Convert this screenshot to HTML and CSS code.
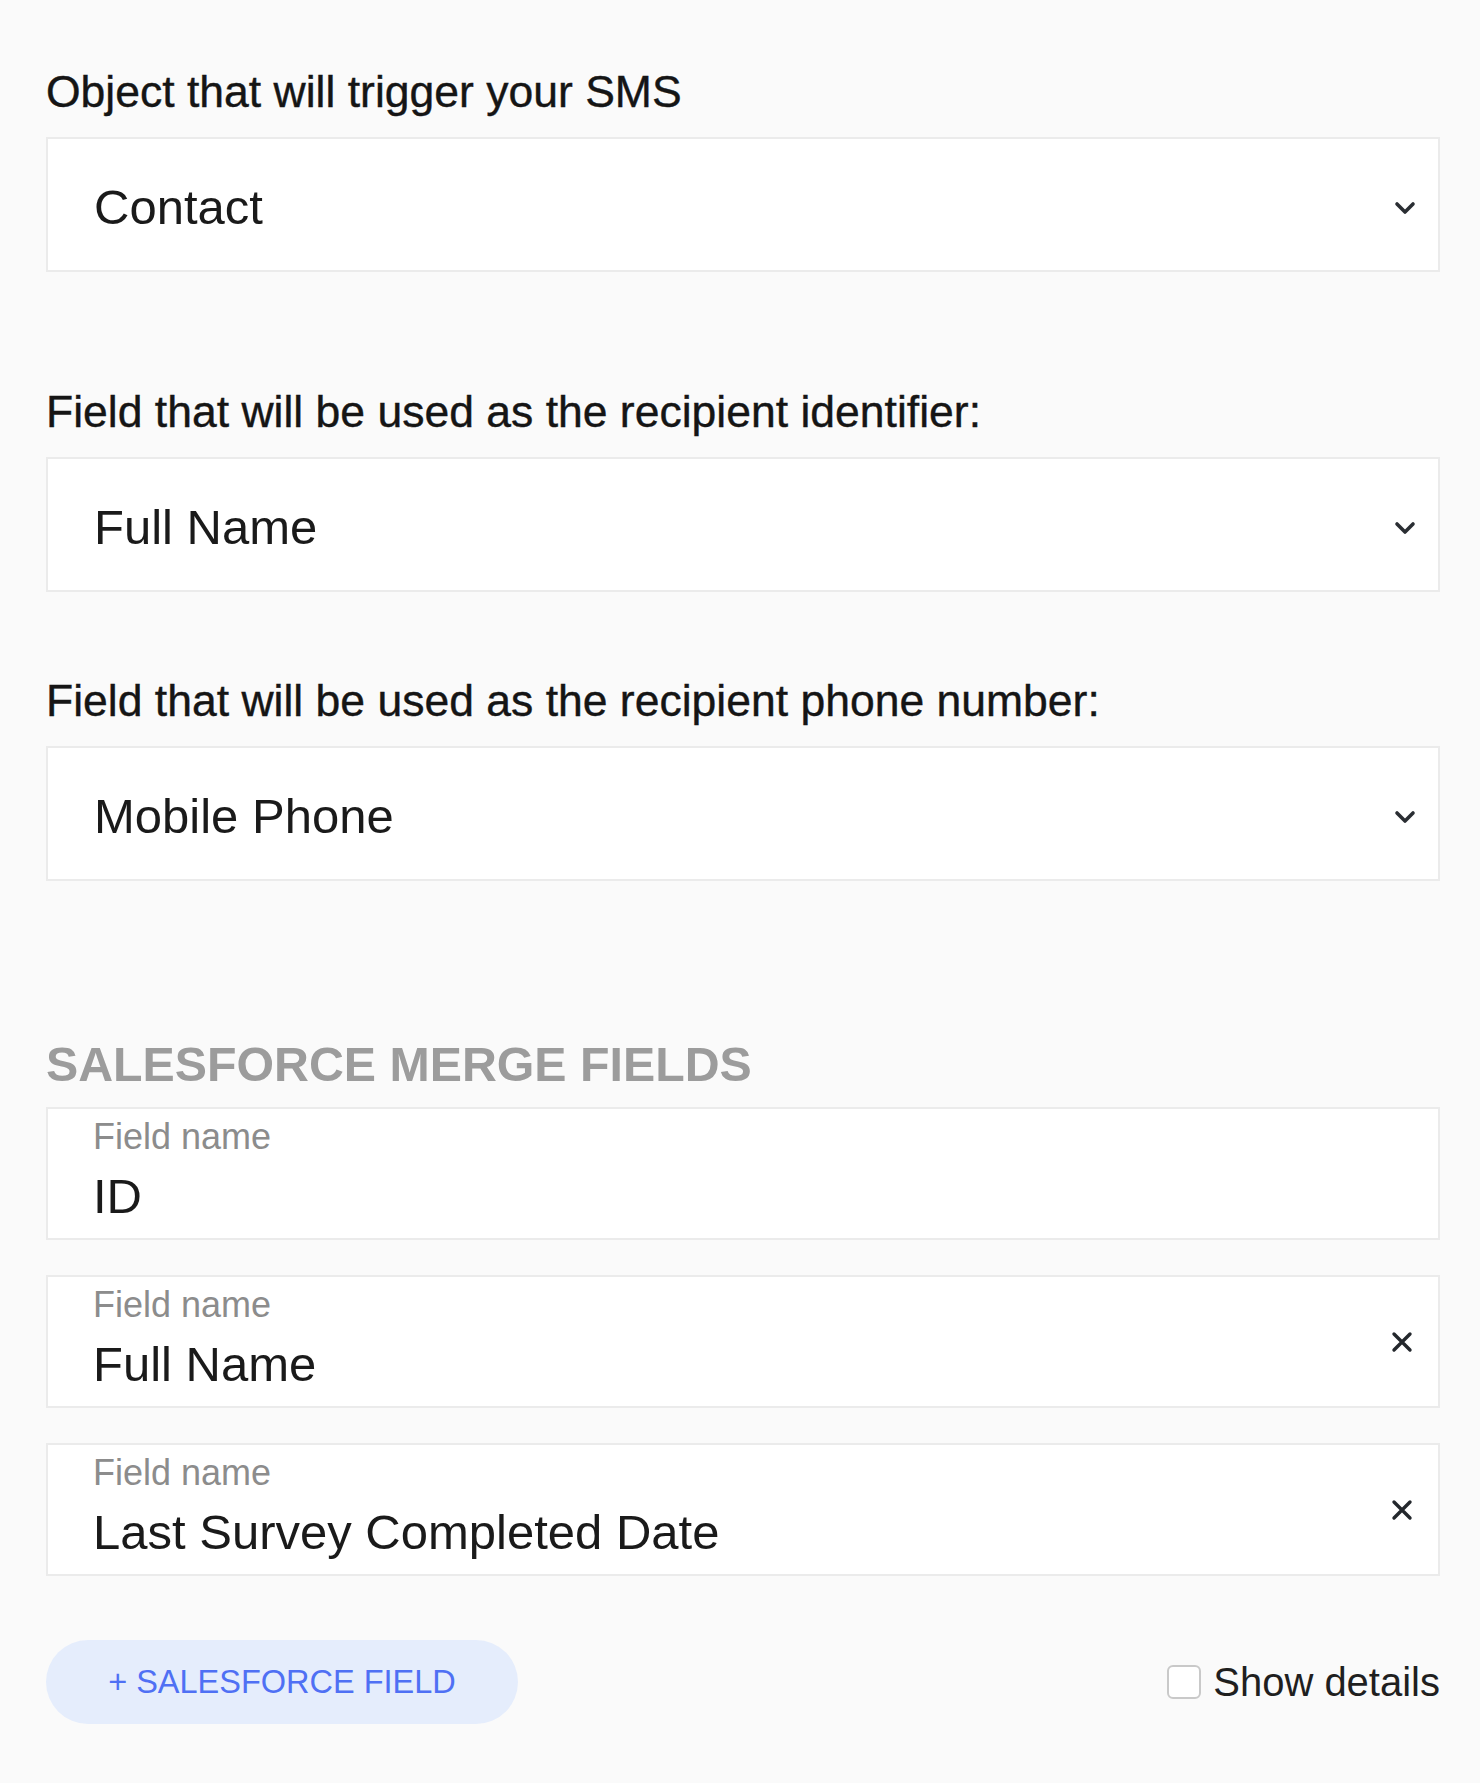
FILE: index.html
```html
<!DOCTYPE html>
<html lang="en">
<head>
<meta charset="utf-8">
<title>SMS trigger settings</title>
<link rel="stylesheet" href="styles.css">
</head>
<body>
<div class="page">
  <div class="group group-first">
    <div class="label">Object that will trigger your SMS</div>
    <div class="select">
      <span class="value">Contact</span>
      <svg class="chevron" width="22" height="14" viewBox="0 0 22 14"><path d="M3 3 L11 11 L19 3" fill="none" stroke="#2a2e33" stroke-width="3.6" stroke-linecap="round" stroke-linejoin="round"/></svg>
    </div>
  </div>
  <div class="group group-second">
    <div class="label">Field that will be used as the recipient identifier:</div>
    <div class="select">
      <span class="value">Full Name</span>
      <svg class="chevron" width="22" height="14" viewBox="0 0 22 14"><path d="M3 3 L11 11 L19 3" fill="none" stroke="#2a2e33" stroke-width="3.6" stroke-linecap="round" stroke-linejoin="round"/></svg>
    </div>
  </div>
  <div class="group group-third">
    <div class="label">Field that will be used as the recipient phone number:</div>
    <div class="select">
      <span class="value">Mobile Phone</span>
      <svg class="chevron" width="22" height="14" viewBox="0 0 22 14"><path d="M3 3 L11 11 L19 3" fill="none" stroke="#2a2e33" stroke-width="3.6" stroke-linecap="round" stroke-linejoin="round"/></svg>
    </div>
  </div>

  <h2 class="section-title">SALESFORCE MERGE FIELDS</h2>

  <div class="merge-list">
    <div class="merge-field">
      <div class="mf-text">
        <div class="mf-label">Field name</div>
        <div class="mf-value">ID</div>
      </div>
    </div>
    <div class="merge-field">
      <div class="mf-text">
        <div class="mf-label">Field name</div>
        <div class="mf-value">Full Name</div>
      </div>
      <svg class="close" width="24" height="24" viewBox="0 0 24 24"><path d="M4 4 L20 20 M20 4 L4 20" fill="none" stroke="#23272c" stroke-width="3.4" stroke-linecap="round"/></svg>
    </div>
    <div class="merge-field">
      <div class="mf-text">
        <div class="mf-label">Field name</div>
        <div class="mf-value">Last Survey Completed Date</div>
      </div>
      <svg class="close" width="24" height="24" viewBox="0 0 24 24"><path d="M4 4 L20 20 M20 4 L4 20" fill="none" stroke="#23272c" stroke-width="3.4" stroke-linecap="round"/></svg>
    </div>
  </div>

  <div class="footer">
    <button class="add-btn" type="button">+ SALESFORCE FIELD</button>
    <label class="details">
      <span class="checkbox"></span>
      <span class="details-text">Show details</span>
    </label>
  </div>
</div>
</body>
</html>
```

FILE: styles.css
```css
html, body {
  margin: 0;
  padding: 0;
  background: #fafafa;
}

body {
  font-family: "Liberation Sans", Arial, Helvetica, sans-serif;
  color: #1c1c1c;
}

.page {
  width: 1394px;
  padding: 68px 0 0 46px;
  display: flex;
  flex-direction: column;
}

.group {
  display: flex;
  flex-direction: column;
  gap: 21px;
}

.group-second {
  margin-top: 116px;
}

.group-third {
  margin-top: 85px;
}

.label {
  font-size: 44.5px;
  line-height: 48px;
  color: #151515;
  -webkit-text-stroke: 0.4px #151515;
  white-space: nowrap;
}

.select {
  box-sizing: border-box;
  height: 135px;
  background: #ffffff;
  border: 2px solid #ebebeb;
  display: flex;
  align-items: center;
  justify-content: space-between;
  padding: 4px 22px 0 46px;
}

.value {
  font-size: 49px;
  line-height: 56px;
  color: #1a1a1a;
}

.chevron {
  display: block;
  margin-top: 2px;
}

.section-title {
  margin: 155px 0 0 0;
  font-size: 48.3px;
  line-height: 56px;
  font-weight: bold;
  color: #9c9c9c;
  white-space: nowrap;
}

.merge-list {
  margin-top: 15px;
  display: flex;
  flex-direction: column;
  gap: 35px;
}

.merge-field {
  box-sizing: border-box;
  height: 133px;
  background: #ffffff;
  border: 2px solid #ebebeb;
  display: flex;
  align-items: center;
  justify-content: space-between;
  padding: 0 24px 0 45px;
}

.mf-text {
  display: flex;
  flex-direction: column;
  gap: 11px;
  margin-top: -6px;
}

.mf-label {
  font-size: 36px;
  line-height: 40px;
  color: #8c8c8c;
}

.mf-value {
  font-size: 49px;
  line-height: 56px;
  color: #1a1a1a;
}

.close {
  display: block;
}

.footer {
  margin-top: 64px;
  display: flex;
  align-items: center;
  justify-content: space-between;
}

.add-btn {
  height: 84px;
  width: 472px;
  border: none;
  border-radius: 42px;
  background: #e5edfc;
  color: #4f70f4;
  font-family: "Liberation Sans", Arial, Helvetica, sans-serif;
  font-size: 32.5px;
  letter-spacing: 0;
  padding: 0;
  cursor: pointer;
}

.details {
  display: flex;
  align-items: center;
  gap: 12px;
}

.checkbox {
  box-sizing: border-box;
  width: 34px;
  height: 34px;
  background: #ffffff;
  border: 2px solid #c9c9c9;
  border-radius: 6px;
}

.details-text {
  font-size: 40px;
  line-height: 48px;
  color: #1f1f1f;
}
```
